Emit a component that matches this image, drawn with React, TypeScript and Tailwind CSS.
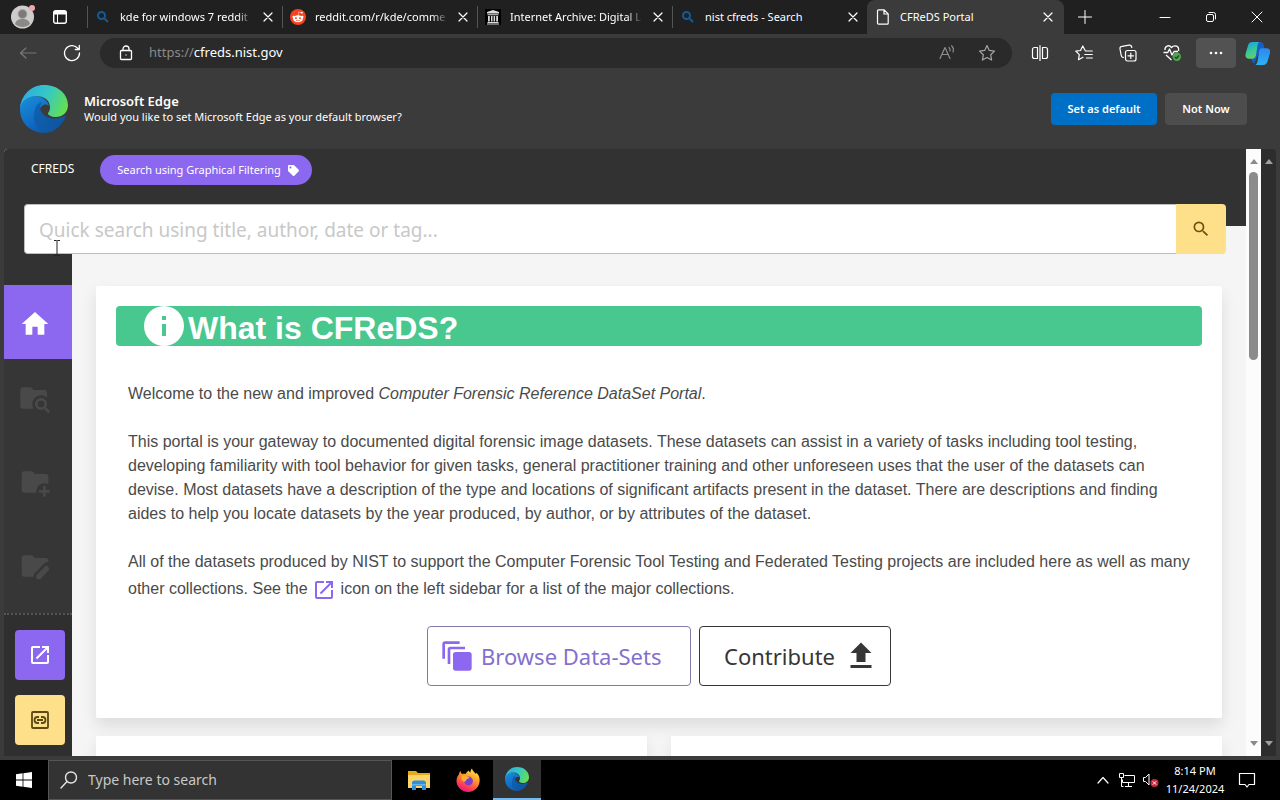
import { useId, type ReactNode } from "react";
import { FaRedditAlien, FaTag } from "react-icons/fa";

type IconProps = { className?: string };

const paths = {
  home: "M10,20V14H14V20H19V12H22L12,3L2,12H5V20H10Z",
  info: "M13,9H11V7H13M13,17H11V11H13M12,2A10,10 0 0,0 2,12A10,10 0 0,0 12,22A10,10 0 0,0 22,12A10,10 0 0,0 12,2Z",
  search:
    "M9.5,3A6.5,6.5 0 0,1 16,9.5C16,11.11 15.41,12.59 14.44,13.73L14.71,14H15.5L20.5,19L19,20.5L14,15.5V14.71L13.73,14.44C12.59,15.41 11.11,16 9.5,16A6.5,6.5 0 0,1 3,9.5A6.5,6.5 0 0,1 9.5,3M9.5,5C7,5 5,7 5,9.5C5,12 7,14 9.5,14C12,14 14,12 14,9.5C14,7 12,5 9.5,5Z",
  openInNew:
    "M14,3V5H17.59L7.76,14.83L9.17,16.24L19,6.41V10H21V3M19,19H5V5H12V3H5C3.89,3 3,3.9 3,5V19A2,2 0 0,0 5,21H19A2,2 0 0,0 21,19V12H19V19Z",
  folderSearch:
    "M16.5,12C19,12 21,14 21,16.5C21,17.38 20.75,18.21 20.31,18.9L23.39,22L22,23.39L18.88,20.32C18.19,20.75 17.37,21 16.5,21C14,21 12,19 12,16.5C12,14 14,12 16.5,12M16.5,14A2.5,2.5 0 0,0 14,16.5A2.5,2.5 0 0,0 16.5,19A2.5,2.5 0 0,0 19,16.5A2.5,2.5 0 0,0 16.5,14M9,4L11,6H19A2,2 0 0,1 21,8V11.81C19.83,10.69 18.25,10 16.5,10A6.5,6.5 0 0,0 10,16.5C10,17.79 10.37,19 11,20H3C1.89,20 1,19.1 1,18V6C1,4.89 1.89,4 3,4H9Z",
  folderPlus:
    "M13 19C13 19.34 13.04 19.67 13.09 20H4A2 2 0 0 1 2 18V6A2 2 0 0 1 4 4H10L12 6H20A2 2 0 0 1 22 8V13.81C21.12 13.3 20.1 13 19 13C15.69 13 13 15.69 13 19M20 18V15H18V18H15V20H18V23H20V20H23V18H20Z",
  folderEdit:
    "M4 4A2 2 0 0 0 2 6V18A2 2 0 0 0 4 20H11V18.1L19.2 9.9C20 9.1 21 8.9 22 9.2V8A2 2 0 0 0 20 6H12L10 4ZM20.6 11.2L13 18.9V22H16.1L23 14.2Z",
  upload: "M9,16V10H5L12,3L19,10H15V16H9M5,20V18H19V20H5Z",
  copies:
    "M11 9H21A2 2 0 0 1 23 11V21A2 2 0 0 1 21 23H11A2 2 0 0 1 9 21V11A2 2 0 0 1 11 9ZM1 14V3A2 2 0 0 1 3 1H14V3H3V14ZM5 18V7A2 2 0 0 1 7 5H18V7H7V18Z",
};

function Glyph({ d, className }: { d: string; className?: string }) {
  return (
    <svg viewBox="0 0 24 24" fill="currentColor" aria-hidden="true" className={className}>
      <path d={d} />
    </svg>
  );
}

function Line({ children, className, width = 1.2, box = 20 }: { children: ReactNode; className?: string; width?: number; box?: number }) {
  return (
    <svg
      viewBox={`0 0 ${box} ${box}`}
      fill="none"
      stroke="currentColor"
      strokeWidth={width}
      strokeLinecap="round"
      strokeLinejoin="round"
      aria-hidden="true"
      className={className}
    >
      {children}
    </svg>
  );
}

function EdgeLogo({ className }: IconProps) {
  const id = useId();
  return (
    <svg viewBox="0 0 48 48" aria-hidden="true" className={className}>
      <defs>
        <linearGradient id={`${id}a`} x1="0" y1="0.3" x2="1" y2="0.6">
          <stop offset="0" stopColor="#2cabe0" />
          <stop offset="0.5" stopColor="#35c7c8" />
          <stop offset="1" stopColor="#65e04f" />
        </linearGradient>
        <linearGradient id={`${id}b`} x1="0" y1="0" x2="0.5" y2="1">
          <stop offset="0" stopColor="#1b8fdc" />
          <stop offset="1" stopColor="#0b5fb8" />
        </linearGradient>
        <linearGradient id={`${id}c`} x1="0" y1="0" x2="1" y2="0.6">
          <stop offset="0" stopColor="#0f62b4" />
          <stop offset="1" stopColor="#0e559f" />
        </linearGradient>
      </defs>
      <path fill={`url(#${id}b)`} d="M0 24C0 15 7 11 15 11c8 0 13 5 14 10-2-2-5-2-7 0-7 6-4 17 3 21 2 2 1 4-2 5.800C9 47 0 37 0 24Z" />
      <path fill={`url(#${id}c)`} d="M15 25c0-4 3-7 7-8-4 5-1 12 5 15 6 3 12 2 17-1 1-.5 2 .3 1.500 1.200C41 42 33 48 24 48 15 45 12 34 15 25Z" />
      <path fill={`url(#${id}a)`} d="M0 24C1 10 11 0 24 0c15 0 24 10 24 20 0 8-6 12-12 12-5 0-8-2-8-3.500 0-1 2-2 2-6C30 15 24 11 16 11 8 11 1 16 0 24Z" />
    </svg>
  );
}

function CopilotLogo({ className }: IconProps) {
  const id = useId();
  return (
    <svg viewBox="0 0 24 24" aria-hidden="true" className={className}>
      <defs>
        <linearGradient id={`${id}a`} x1="0" y1="0" x2="0.3" y2="1">
          <stop offset="0" stopColor="#1a9ee8" />
          <stop offset="0.55" stopColor="#35c6a0" />
          <stop offset="1" stopColor="#5fd068" />
        </linearGradient>
        <linearGradient id={`${id}b`} x1="0" y1="0" x2="0" y2="1">
          <stop offset="0" stopColor="#2f86f0" />
          <stop offset="1" stopColor="#2bb3f5" />
        </linearGradient>
      </defs>
      <path fill="#1560c8" d="M9 1h5c2.500 0 3.500 1 4 3l1 4-6 4-4 9c-1 1-2-1-3-4Z" />
      <path fill={`url(#${id}a)`} d="M7 1h7c-1.200.6-1.700 1.600-2 3l-1.500 10c-.4 2-1.500 3-3.500 3H3.500C1 17 0 15 .5 12.500L3 4c.6-2 2-3 4-3Z" />
      <path fill={`url(#${id}b)`} d="M16.500 7H21c2.500 0 3.500 2 3 4.500L21.500 20c-.6 2-2 3-4 3H10c1.200-.6 1.700-1.600 2-3l1.500-10c.4-2 1-3 3-3Z" />
    </svg>
  );
}

function FirefoxLogo({ className }: IconProps) {
  const id = useId();
  return (
    <svg viewBox="0 0 24 24" aria-hidden="true" className={className}>
      <defs>
        <linearGradient id={`${id}a`} x1="0.8" y1="0" x2="0.3" y2="1">
          <stop offset="0" stopColor="#fff04a" />
          <stop offset="0.4" stopColor="#ff9a2a" />
          <stop offset="0.75" stopColor="#ff4050" />
          <stop offset="1" stopColor="#e31587" />
        </linearGradient>
      </defs>
      <path
        fill={`url(#${id}a)`}
        d="M4.500 3c.2 1.500.8 2.300 1.500 3 1-.4 2.300-.5 3.500 0C10.500 4 12 3 13 2.500c0 1 .5 1.500 1.300 2C14.500 3 15 1.500 16 .5c.5 2.500 2.500 3.500 4 5.500.3-.5.4-1 .3-1.600C23 7 24 10 23.600 13.500 23 19.500 18 24 12 24S.5 19 .5 13c0-3 1-5 2.500-6.500C3.200 5 3.600 4 4.500 3Z"
      />
      <circle cx="12.500" cy="13" r="4.400" fill="#7a3fd0" />
      <path fill="#ffb02e" d="M6 8c2-1 4-.6 5 .6l2.500.6c-.4 1.300-2 1.600-3 2.200-.7.600-.4 2-1.500 2.200-1 .3-2-.4-2.700-1C5 11 5 9.500 6 8Z" />
    </svg>
  );
}

function ExplorerLogo({ className }: IconProps) {
  return (
    <svg viewBox="0 0 24 22" aria-hidden="true" className={className}>
      <path fill="#e8a91c" d="M1 2h8l2 2h12v5H1Z" />
      <path fill="#fbd567" d="M1 6h22v13H1Z" />
      <path fill="#2f8fdc" d="M5 21v-7c0-1.500 1-2.500 2.500-2.500h9c1.500 0 2.500 1 2.500 2.500v7h-4v-4H9v4Z" />
      <path fill="#62b5ee" d="M5 15h14v1.500H5Z" />
    </svg>
  );
}

function BlueSearch({ className }: IconProps) {
  return (
    <svg viewBox="0 0 16 16" fill="none" stroke="#155a96" strokeWidth="2" aria-hidden="true" className={className}>
      <circle cx="6.500" cy="6.500" r="3.500" />
      <path d="M9.500 9.500 13 13" />
    </svg>
  );
}

function RedditBadge({ className }: IconProps) {
  return (
    <span className={`flex items-center justify-center rounded-full bg-[#f4441e] text-white ${className ?? ""}`}>
      <FaRedditAlien className="size-3" />
    </span>
  );
}

function ArchiveIcon({ className }: IconProps) {
  return (
    <svg viewBox="0 0 16 16" aria-hidden="true" className={className}>
      <path fill="#000" d="M0 0h16v16H0Z" />
      <path fill="#ddd" d="M8 1l6 2v1.500H2V3ZM2.500 5.300h11v1h-11ZM3 7h1.800v5.500H3ZM6 7h1.500v5.500H6ZM8.600 7h1.500v5.500H8.600ZM11.200 7H13v5.500h-1.800ZM2.500 13h11v1h-11ZM2 14.400h12v1H2Z" />
    </svg>
  );
}

function PageIcon({ className }: IconProps) {
  return (
    <Line box={16} className={className}>
      <path d="M3.500.8h5.700l4 4v9.400a1 1 0 0 1-1 1H3.500a1 1 0 0 1-1-1V1.800a1 1 0 0 1 1-1ZM9 1v4h4" />
    </Line>
  );
}

function Cross({ className }: IconProps) {
  return (
    <Line box={10} className={className}>
      <path d="M1 1l8 8M9 1L1 9" />
    </Line>
  );
}

const tabs = [
  { title: "kde for windows 7 reddit", Icon: BlueSearch, fade: true },
  { title: "reddit.com/r/kde/comme", Icon: RedditBadge, fade: true },
  { title: "Internet Archive: Digital L", Icon: ArchiveIcon, fade: true },
  { title: "nist cfreds - Search", Icon: BlueSearch, fade: false },
];

function TabStrip() {
  return (
    <header className="flex h-[34px] shrink-0 items-stretch bg-[#202020] text-[11px] text-white">
      <div className="flex w-[87px] shrink-0 items-center gap-[18px] pl-[11px]">
        <button aria-label="Profile" className="relative">
          <svg viewBox="0 0 24 24" className="size-6" aria-hidden="true">
            <circle cx="11.500" cy="12" r="11.500" fill="#cfcdcb" />
            <circle cx="11.500" cy="9" r="4.500" fill="#7d7b7a" stroke="#aaa" />
            <path d="M4 19c1-4 4-5 7.500-5s6.500 1 7.500 5c-4 4-11 4-15 0Z" fill="#8b8988" />
            <circle cx="21" cy="3" r="3" fill="#f2a6ad" />
          </svg>
        </button>
        <button aria-label="Tab actions">
          <svg viewBox="0 0 14 14" className="size-[14px]" aria-hidden="true">
            <rect x=".7" y=".7" width="12.600" height="12.600" rx="2" fill="none" stroke="#fff" strokeWidth="1.400" />
            <path d="M1 1h12v3.500H1ZM4 4h1v9H4Z" fill="#fff" />
          </svg>
        </button>
      </div>
      <nav aria-label="Tabs" className="flex min-w-0">
        {tabs.map(({ title, Icon, fade }) => (
          <div key={title} className="flex w-[195px] min-w-0 items-center pr-[5px]">
            <span className="h-[22px] w-px shrink-0 bg-[#555]" />
            <Icon className="ml-[7px] size-4 shrink-0" />
            <a
              href="#tab"
              className={
                fade
                  ? "ml-[9px] min-w-0 flex-1 overflow-hidden whitespace-nowrap [mask-image:linear-gradient(to_right,black_88%,transparent)]"
                  : "ml-[9px] min-w-0 flex-1 overflow-hidden whitespace-nowrap"
              }
            >
              {title}
            </a>
            <button aria-label={`Close ${title}`} className="ml-[6px] shrink-0 p-1">
              <Cross className="size-[10px]" />
            </button>
          </div>
        ))}
        <div className="flex w-[197px] min-w-0 items-center rounded-t-lg bg-[#3b3b3b] pr-[7px] pl-[8px]">
          <PageIcon className="size-4 shrink-0" />
          <a href="#tab" aria-current="page" className="ml-[9px] flex-1 truncate">
            CFReDS Portal
          </a>
          <button aria-label="Close CFReDS Portal" className="shrink-0 p-1">
            <Cross className="size-[10px]" />
          </button>
        </div>
      </nav>
      <button aria-label="New tab" className="ml-[14px] shrink-0">
        <Line box={14} width={1} className="size-[14px]">
          <path d="M7 .5v13M.5 7h13" />
        </Line>
      </button>
      <div className="ml-auto flex shrink-0">
        <button aria-label="Minimize" className="flex w-[46px] items-center justify-center">
          <Line box={12} width={1} className="size-3">
            <path d="M1 6.500h10" />
          </Line>
        </button>
        <button aria-label="Restore" className="flex w-[46px] items-center justify-center">
          <Line box={12} width={1} className="size-3">
            <rect x="1.500" y="3.500" width="7" height="7" rx="1.500" />
            <path d="M4 1.500h4.500a2 2 0 0 1 2 2V8" />
          </Line>
        </button>
        <button aria-label="Close" className="flex w-[46px] items-center justify-center">
          <Line box={12} width={1} className="size-3">
            <path d="M1 1l10 10M11 1L1 11" />
          </Line>
        </button>
      </div>
    </header>
  );
}

function Toolbar() {
  return (
    <div className="flex h-[38px] shrink-0 items-center text-white">
      <button aria-label="Back" className="ml-[19px] text-[#777]">
        <Line box={18} className="size-[18px]">
          <path d="M17 9H1.500M7 4L1.500 9l5.500 5" />
        </Line>
      </button>
      <button aria-label="Refresh" className="ml-[26px]">
        <Line box={18} width={1.3} className="size-[18px]">
          <path d="M16.500 9A7.500 7.500 0 1 1 14.500 4L16 5.500M16.300 1.500v4h-4" />
        </Line>
      </button>
      <div className="ml-[19px] flex h-[30px] min-w-0 flex-1 items-center rounded-full bg-[#2a2a2a] pr-[16px] pl-[18px]">
        <button aria-label="View site information">
          <Line box={16} width={1.3} className="size-4">
            <rect x="2.500" y="5.500" width="11" height="9" rx="1" />
            <path d="M5 5.500V4a3 3 0 0 1 6 0v1.500M8 10v.1" />
          </Line>
        </button>
        <a href="https://cfreds.nist.gov" className="ml-[15px] flex-1 text-[13px]">
          <span className="text-[#8a8a8a]">https://</span>
          cfreds.nist.gov
        </a>
        <button aria-label="Read aloud" className="text-[#8f8f8f]">
          <Line box={18} className="size-[18px]">
            <path d="M2 14.500L7 3.500l5 11M4 10.500h6M11 3.500c1 .8 1.300 2 1 3.500M13.500 1.800c1.800 1.500 2.300 4 1.500 6.200" />
          </Line>
        </button>
        <button aria-label="Add to favorites" className="ml-[22px] text-[#a5a5a5]">
          <Line box={18} className="size-[18px]">
            <path d="M9 1.500l2.300 4.900 5.200.7-3.800 3.700.9 5.300L9 13.500l-4.600 2.600.9-5.300L1.500 7.100l5.200-.7Z" />
          </Line>
        </button>
      </div>
      <div className="flex shrink-0 items-center">
        <button aria-label="Split screen" className="flex w-[44px] justify-center pl-[11px]">
          <Line box={18} className="size-[18px]">
            <path d="M9 1.500v15M6.500 3.500h-3a2 2 0 0 0-2 2v7a2 2 0 0 0 2 2h3ZM11.500 3.500h3a2 2 0 0 1 2 2v7a2 2 0 0 1-2 2h-3Z" />
          </Line>
        </button>
        <button aria-label="Favorites" className="flex w-[44px] justify-center pl-[12px]">
          <Line box={18} className="size-[18px]">
            <path d="M8 13.300l-4.500 2.400.8-5L.8 7.200l4.700-.7L7.800 2l2.200 4.300M10.500 7h6.800M9.800 10.500h7.500M11.500 14h5.800" />
          </Line>
        </button>
        <button aria-label="Collections" className="flex w-[44px] justify-center pl-[12px]">
          <Line box={18} className="size-[18px]">
            <rect x="6.500" y="6.500" width="10.500" height="10.500" rx="2" />
            <path d="M11.800 9v5.500M9 11.800h5.500M4.500 13.500C3 13.500 2.500 12.500 2.200 11.300L1 5c-.3-1.500.5-2.500 2-2.700L10 1.200c1.300-.2 2.500.5 2.800 2.300" />
          </Line>
        </button>
        <button aria-label="Browser essentials" className="flex w-[44px] justify-center pl-[12px]">
          <svg viewBox="0 0 18 18" className="size-[18px]" fill="none" aria-hidden="true">
            <path
              stroke="#fff"
              strokeWidth="1.300"
              strokeLinejoin="round"
              d="M.5 8.500h4.300L6.500 5l2.500 6 2-3.500h4M2 6C1.500 2 6 .3 8.500 3.500 11.500.3 16.500 2 15.500 7M3 11l5.500 5"
            />
            <circle cx="13.800" cy="12.800" r="4.200" fill="#4fa84c" />
            <path stroke="#1c3d1b" strokeWidth="1.200" d="M11.800 12.800l1.500 1.500 2.700-2.800" />
          </svg>
        </button>
        <button aria-label="Settings and more" className="ml-[8px] flex h-[30px] w-[40px] items-center justify-center rounded bg-[#525252]">
          <svg viewBox="0 0 16 4" className="h-1 w-4" fill="currentColor" aria-hidden="true">
            <circle cx="3" cy="2" r="1.300" />
            <circle cx="8" cy="2" r="1.300" />
            <circle cx="13" cy="2" r="1.300" />
          </svg>
        </button>
        <button aria-label="Copilot" className="ml-[9px] pr-[10px]">
          <CopilotLogo className="size-[25px]" />
        </button>
      </div>
    </div>
  );
}

function DefaultBrowserBar() {
  return (
    <section className="flex h-[77px] shrink-0 items-center pr-[33px] pb-[3px] pl-5 text-white">
      <EdgeLogo className="size-[48px] shrink-0" />
      <div className="ml-4 flex-1">
        <h2 className="text-[13px] leading-4 font-semibold">Microsoft Edge</h2>
        <p className="text-[11px] leading-4">Would you like to set Microsoft Edge as your default browser?</p>
      </div>
      <button className="h-8 w-[106px] rounded-sm bg-[#0070c6] text-[11px] font-semibold">Set as default</button>
      <button className="ml-2 h-8 w-[82px] rounded-sm bg-[#4d4d4d] text-[11px] font-semibold">Not Now</button>
    </section>
  );
}

function Triangle({ down = false, className }: { down?: boolean; className?: string }) {
  return (
    <svg viewBox="0 0 8 5" className={`h-[5px] w-2 ${className ?? ""}`} fill="currentColor" aria-hidden="true">
      <path d={down ? "M0 0h8L4 5Z" : "M4 0l4 5H0Z"} />
    </svg>
  );
}

const folderLinks = [
  { label: "Search data-sets", d: paths.folderSearch },
  { label: "Add data-set", d: paths.folderPlus },
  { label: "Edit data-set", d: paths.folderEdit },
];

function Sidebar() {
  return (
    <aside className="flex w-[68px] shrink-0 flex-col bg-[#323232] pt-[59px] text-[#494949]">
      <a href="#home" aria-label="Home" className="flex h-[74px] shrink-0 items-center bg-[#8c67ef] pt-[3px] pl-[15px] text-white">
        <Glyph d={paths.home} className="size-8" />
      </a>
      <nav aria-label="Data-sets" className="bg-[#363636] pb-[2px]">
        {folderLinks.map(({ label, d }) => (
          <a key={label} href="#folder" aria-label={label} className="flex h-[84px] items-center pb-[6px] pl-[15px]">
            <Glyph d={d} className="size-8" />
          </a>
        ))}
      </nav>
      <div className="flex flex-1 flex-col items-center gap-[15px] border-t-2 border-dotted border-[#555] bg-[#2f2f2f] pt-[15px] pl-1">
        <button aria-label="Collections" className="flex size-[50px] shrink-0 items-center justify-center rounded bg-[#8c67ef] text-white">
          <Glyph d={paths.openInNew} className="size-6" />
        </button>
        <button aria-label="Links" className="flex size-[50px] shrink-0 items-center justify-center rounded bg-[#ffe08a] text-[#5e4a12]">
          <svg viewBox="0 0 24 24" className="size-6" fill="none" stroke="currentColor" strokeWidth="1.800" aria-hidden="true">
            <rect x="4" y="4" width="16" height="16" rx="1" />
            <path d="M11 9H9.500a3 3 0 0 0 0 6H11M13 9h1.500a3 3 0 0 1 0 6H13M9 12h6" />
          </svg>
        </button>
      </div>
    </aside>
  );
}

function Portal() {
  return (
    <div className="flex min-w-0 flex-1 flex-col bg-[#f5f5f5]">
      <div className="relative z-10 h-[77px] shrink-0 bg-[#323232] px-5">
        <nav className="flex h-[55px] items-start text-white">
          <a href="#cfreds" className="mt-[11px] w-[76px] pl-[7px] text-xs leading-[18px]">
            CFREDS
          </a>
          <button className="mt-[6px] flex h-[30px] w-[212px] items-center justify-center gap-[7px] rounded-full bg-[#8c67ef] pt-px pl-1 text-[11px] whitespace-nowrap">
            Search using Graphical Filtering
            <FaTag className="size-[11px] shrink-0" />
          </button>
        </nav>
        <form role="search" className="flex h-[50px]" onSubmit={(event) => event.preventDefault()}>
          <input
            type="search"
            aria-label="Quick search"
            placeholder="Quick search using title, author, date or tag..."
            className="min-w-0 flex-1 rounded-l border border-r-0 border-[#bdbdbd] bg-white pt-[3px] pl-[14px] text-[19px] text-[#363636] outline-none placeholder:text-[#c8c8c8]"
          />
          <button aria-label="Search" className="flex w-[50px] items-center justify-center rounded-r bg-[#ffe08a] text-[#6b5310]">
            <Glyph d={paths.search} className="size-5" />
          </button>
        </form>
        <svg viewBox="0 0 8 16" className="absolute top-[91px] left-[49px] h-4 w-2" fill="none" stroke="#222" aria-hidden="true">
          <path d="M1 .5h2.500L4 1l.5-.5H7M4 1v14M1 15.500h2.500L4 15l.5.500H7" />
        </svg>
      </div>
      <div className="flex min-h-0 flex-1">
        <Sidebar />
        <main className="flex min-h-0 min-w-0 flex-1 flex-col overflow-hidden px-6 pt-[60px] font-['Liberation_Sans',sans-serif] text-[#4a4a4a]">
          <article className="shrink-0 rounded-xs bg-white p-5 pb-8 shadow-[0_8px_16px_rgba(10,10,10,0.1)]">
            <h1 className="flex h-10 items-center rounded bg-[#48c78e] pl-6 text-[32px] leading-10 font-bold text-white">
              <Glyph d={paths.info} className="size-12 shrink-0" />
              <span className="pt-[3px]">What is CFReDS?</span>
            </h1>
            <div className="mt-9 pl-3 text-base leading-6">
              <p>
                Welcome to the new and improved <em>Computer Forensic Reference DataSet Portal</em>.
              </p>
              <p className="mt-6 pr-3">
                This portal is your gateway to documented digital forensic image datasets. These datasets can assist in a
                variety of tasks including tool testing, developing familiarity with tool behavior for given tasks, general
                practitioner training and other unforeseen uses that the user of the datasets can devise. Most datasets have a
                description of the type and locations of significant artifacts present in the dataset. There are descriptions
                and finding aides to help you locate datasets by the year produced, by author, or by attributes of the dataset.
              </p>
              <p className="mt-6">
                All of the datasets produced by NIST to support the Computer Forensic Tool Testing and Federated Testing
                projects are included here as well as many other collections. See the{" "}
                <span className="inline-flex h-8 items-center align-middle">
                  <Glyph d={paths.openInNew} className="size-6 text-[#8c67ef]" />
                </span>{" "}
                icon on the left sidebar for a list of the major collections.
              </p>
            </div>
            <div className="mt-5 flex justify-center gap-2 font-['Noto_Sans',sans-serif] text-[22px]">
              <button className="flex h-[60px] w-[264px] items-center gap-[8px] rounded border border-[#8579a8] pl-[13px] text-[#8470cc]">
                <Glyph d={paths.copies} className="size-8 text-[#8c67ef]" />
                Browse Data-Sets
              </button>
              <button className="flex h-[60px] w-[192px] items-center gap-[8px] rounded border border-[#363636] pl-6 text-[#363636]">
                Contribute
                <Glyph d={paths.upload} className="size-9" />
              </button>
            </div>
          </article>
          <div className="mt-[18px] grid min-h-0 flex-1 grid-cols-2 gap-6">
            <section className="bg-white shadow-[0_8px_16px_rgba(10,10,10,0.1)]" />
            <section className="bg-white shadow-[0_8px_16px_rgba(10,10,10,0.1)]" />
          </div>
        </main>
      </div>
    </div>
  );
}

function Taskbar() {
  return (
    <footer className="flex h-10 shrink-0 items-stretch bg-black text-white">
      <button aria-label="Start" className="flex w-12 items-center justify-center">
        <svg viewBox="0 0 16 16" className="size-4" fill="#fff" aria-hidden="true">
          <path d="M0 2.200L6.600 1.300v6.300H0ZM7.400 1.200L16 0v7.600H7.400ZM0 8.400h6.600v6.300L0 13.800ZM7.400 8.400H16V16l-8.600-1.200Z" />
        </svg>
      </button>
      <label className="flex w-[344px] items-center border border-[#555] bg-[#333] pl-[11px]">
        <Line box={18} width={1.4} className="size-[18px] shrink-0 text-[#e5e5e5]">
          <circle cx="11" cy="6.500" r="5.500" />
          <path d="M7 10.500L1 17" />
        </Line>
        <input
          type="search"
          aria-label="Type here to search"
          placeholder="Type here to search"
          className="ml-[10px] min-w-0 flex-1 bg-transparent text-sm outline-none placeholder:text-[#c8c8c8]"
        />
      </label>
      <button aria-label="File Explorer" className="ml-[2px] flex w-[49px] items-center justify-center">
        <ExplorerLogo className="h-[22px] w-6" />
      </button>
      <button aria-label="Firefox" className="flex w-[50px] items-center justify-center">
        <FirefoxLogo className="size-6" />
      </button>
      <button aria-label="Microsoft Edge" className="flex w-12 items-center justify-center border-b-2 border-[#76b9ed] bg-[#333]">
        <EdgeLogo className="size-6" />
      </button>
      <div className="ml-auto flex items-center">
        <button aria-label="Show hidden icons">
          <Line box={12} className="size-3">
            <path d="M1 9l5-5.500L11 9" />
          </Line>
        </button>
        <svg viewBox="0 0 16 16" className="ml-[10px] size-4" fill="none" stroke="#fff" aria-label="Network">
          <path d="M5.500 3.500h10v7h-12v-3M9.500 10.500v4M6 14.500h7M.5 1.500h4v4h-4ZM2.500 5.500v9h2" />
        </svg>
        <svg viewBox="0 0 18 18" className="ml-[7px] size-[18px]" fill="none" stroke="#fff" aria-label="Sound off">
          <path d="M1.500 6.500h2L7 3v11L3.500 10.500h-2Z" />
          <circle cx="12.500" cy="12" r="4" fill="#c5283c" stroke="none" />
          <path d="M10.800 10.300l3.400 3.400M14.200 10.300l-3.400 3.400" />
        </svg>
        <time className="ml-[3px] w-[64px] text-center text-[11px] leading-[18px]">
          8:14 PM
          <br />
          11/24/2024
        </time>
        <button aria-label="Notifications" className="ml-[11px] flex w-[42px]">
          <Line box={18} className="size-[18px]">
            <path d="M1.500 2.500h15v11H11L9 16l-2-2.500H1.500Z" />
          </Line>
        </button>
      </div>
    </footer>
  );
}

export default function App() {
  return (
    <div className="flex h-screen flex-col overflow-hidden bg-[#3b3b3b] font-['Noto_Sans',sans-serif]">
      <TabStrip />
      <Toolbar />
      <DefaultBrowserBar />
      <div className="mx-1 mb-1 flex min-h-0 flex-1 overflow-hidden rounded-t">
        <Portal />
        <div className="flex w-[15px] shrink-0 flex-col items-center bg-[#fcfcfc] py-[10px] text-[#8a8a8a]">
          <Triangle />
          <div className="mt-[8px] h-[188px] w-[9px] rounded-full bg-[#8b8b8b]" />
          <Triangle down className="mt-auto" />
        </div>
        <div className="flex w-[15px] shrink-0 flex-col items-center bg-[#2d2d2d] py-[10px] text-[#a0a0a0]">
          <Triangle />
          <Triangle down className="mt-auto" />
        </div>
      </div>
      <Taskbar />
    </div>
  );
}
